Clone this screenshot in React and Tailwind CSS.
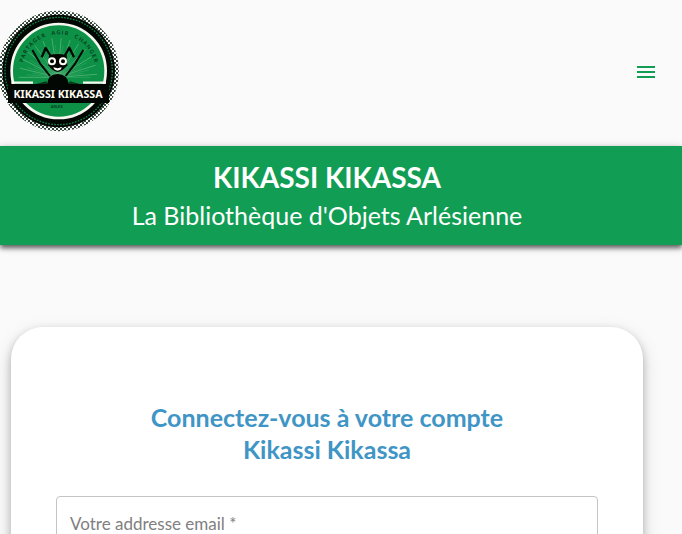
import { MdMenu } from "react-icons/md";

const rays = Array.from({ length: 41 }, (_, i) => {
  const angle = Math.PI * (1 + i / 40);
  const length = i % 3 === 0 ? 118 : i % 3 === 1 ? 96 : 78;
  return {
    x: 174 + Math.cos(angle) * length,
    y: 232 + Math.sin(angle) * length,
    bright: i % 3 === 0,
  };
});

function Logo() {
  return (
    <svg viewBox="0 0 360 396" className="block h-[132px] w-[120px]" role="img" aria-label="Kikassi Kikassa, Arles">
      <defs>
        <path id="motto" d="M66 213A110 110 0 0 1 286 213" />
        <clipPath id="disc">
          <circle cx="176" cy="213" r="139" />
        </clipPath>
        <pattern id="halftone" width="12" height="12" patternUnits="userSpaceOnUse">
          <path d="M0 0H6V6H0ZM6 6H12V12H6Z" fill="#33463a" />
        </pattern>
      </defs>
      <circle cx="176" cy="213" r="174" fill="none" stroke="url(#halftone)" strokeWidth="13" />
      <circle cx="176" cy="213" r="169" fill="#030704" />
      <circle cx="176" cy="213" r="161" fill="none" stroke="#0e8546" strokeWidth="4" strokeDasharray="5 4" />
      <circle cx="176" cy="213" r="141" fill="#0c9147" stroke="#f6f7ef" strokeWidth="8" />
      <g clipPath="url(#disc)">
        {rays.map((ray, i) => (
          <line
            key={i}
            x1="174"
            y1="232"
            x2={ray.x}
            y2={ray.y}
            stroke={ray.bright ? "#8ccb9d" : "#50b174"}
            strokeWidth={ray.bright ? 1.4 : 1.2}
          />
        ))}
      </g>
      <text fill="#07381c" fontSize="16" fontWeight="700" fontFamily="Lato, sans-serif" textAnchor="middle">
        <textPath href="#motto" startOffset="50%" xmlSpace="preserve">
          {"P A R T A G E R \u00a0\u00a0\u00a0 A G I R \u00a0\u00a0\u00a0 C H A N G E R"}
        </textPath>
      </text>
      <path d="M34 248H99M249 248H318" stroke="#f6f7ef" strokeWidth="7" />
      <g fill="none" stroke="#030704" strokeLinejoin="round">
        <path d="M125 172L137 144L152 168M194 168L208 143L222 172" strokeWidth="7" />
        <path d="M97 150L120 190L150 228M250 150L226 190L197 228" strokeWidth="6" />
      </g>
      <path d="M100 254L138 244L148 254ZM248 254L210 244L200 254Z" fill="#07381c" />
      <path d="M142 254Q142 223 173 222Q204 223 206 254Z" fill="#030704" />
      <path d="M147 166Q173 158 200 166L202 196Q188 214 173 216Q157 214 145 196Z" fill="#030704" />
      <g fill="#fffdf4">
        <circle cx="156" cy="184" r="12" />
        <circle cx="189" cy="184" r="12" />
        <path d="M160 202Q173 207 185 202Q183 212 173 212Q163 212 160 202Z" />
      </g>
      <circle cx="156" cy="184" r="6" fill="#030704" />
      <circle cx="189" cy="184" r="6" fill="#030704" />
      <path d="M24 252H327V309H24Z" fill="#030704" />
      <text x="174" y="295" textAnchor="middle" fill="#fffdf4" fontSize="32" fontWeight="700" fontFamily="'Noto Sans', sans-serif">
        KIKASSI KIKASSA
      </text>
      <text x="170" y="324" textAnchor="middle" fill="#07381c" fontSize="12" fontWeight="700" fontFamily="Lato, sans-serif">
        ARLES
      </text>
    </svg>
  );
}

export default function App() {
  return (
    <div className="min-h-screen bg-[#fafafa] font-[Lato,sans-serif]">
      <header className="flex items-center justify-between pr-6 pb-[14px]">
        <a href="#accueil">
          <Logo />
        </a>
        <button type="button" aria-label="Menu" className="mt-3 text-[#119d53]">
          <MdMenu size={24} />
        </button>
      </header>

      <section className="bg-[#119d53] pt-3 pr-7 pb-[11px] text-center text-white shadow-[0_3px_5px_rgba(0,0,0,0.6),0_1px_10px_rgba(0,0,0,0.12)]">
        <h1 className="text-[28px] leading-[38px] font-bold">KIKASSI KIKASSA</h1>
        <p className="text-[25px] leading-[38px]">La Bibliothèque d'Objets Arlésienne</p>
      </section>

      <main className="pt-[82px] pr-[39px] pb-12 pl-[11px]">
        <form className="rounded-[32px] bg-white px-[45px] pt-[74px] pb-16 shadow-[0_4px_8px_rgba(0,0,0,0.25),0_6px_20px_rgba(0,0,0,0.12)]">
          <h2 className="text-center text-[25px] leading-8 font-bold text-[#3f95c5]">
            Connectez-vous à votre compte
            <br />
            Kikassi Kikassa
          </h2>
          <div className="relative mt-[31px]">
            <input
              id="email"
              type="email"
              required
              className="peer block h-14 w-full rounded border border-[#c4c4c4] bg-transparent px-[13px] text-base outline-none focus:border-[#119d53]"
            />
            <label
              htmlFor="email"
              className="pointer-events-none absolute inset-y-0 left-[14px] flex items-center text-[17px] text-[#808080] peer-valid:hidden peer-focus:hidden"
            >
              Votre addresse email *
            </label>
          </div>
        </form>
      </main>
    </div>
  );
}
